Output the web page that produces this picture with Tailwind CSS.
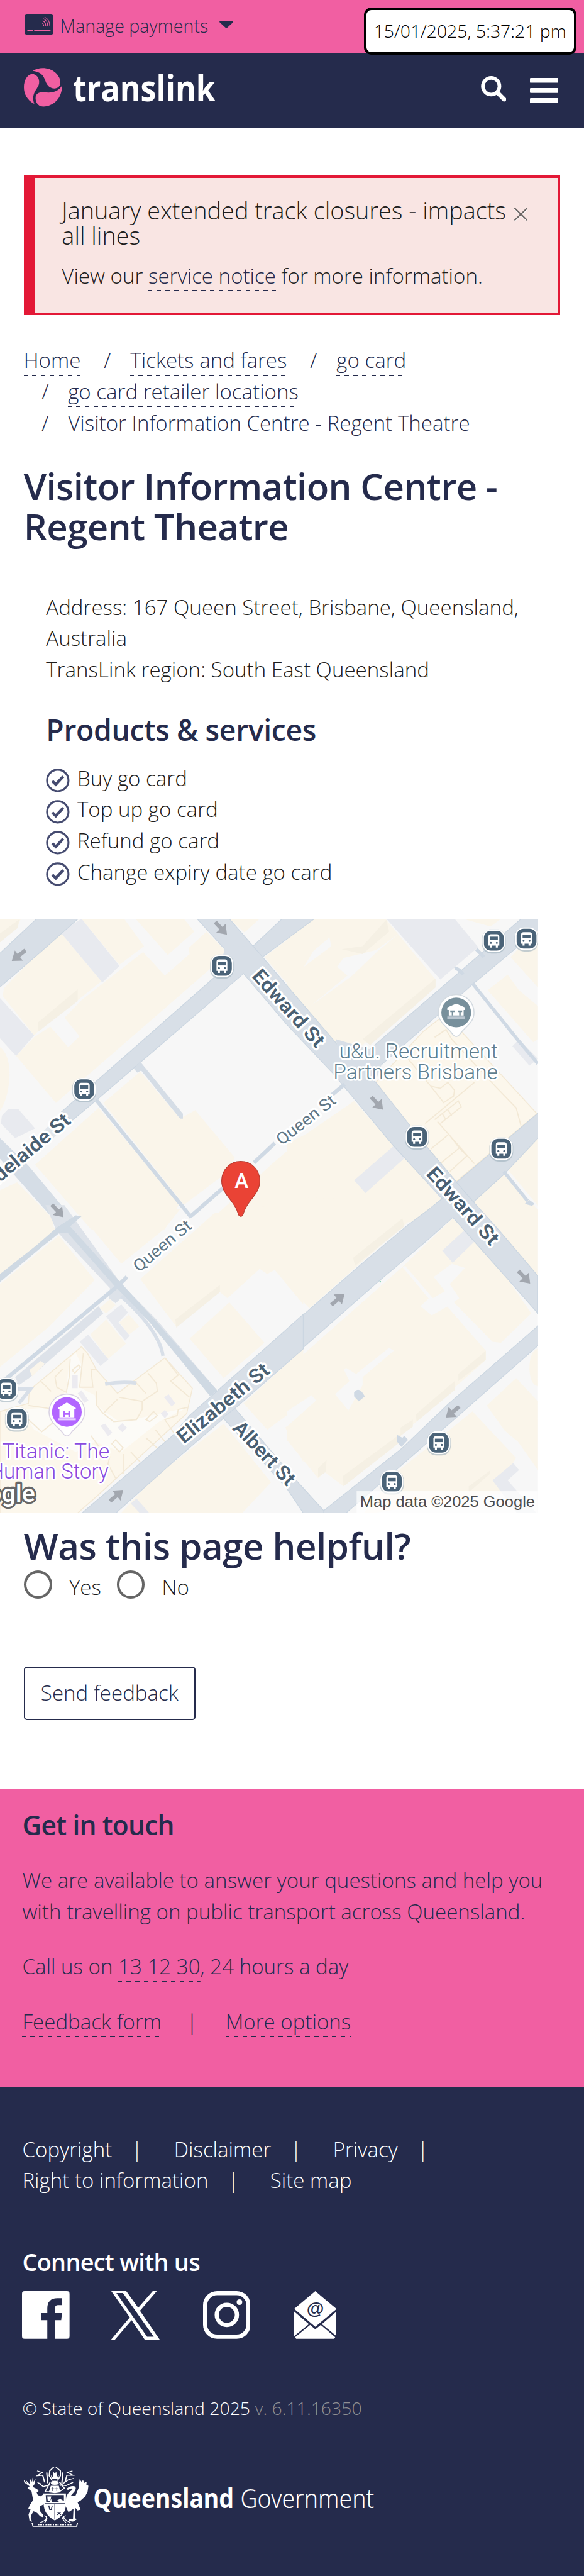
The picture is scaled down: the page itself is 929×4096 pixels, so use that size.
<!DOCTYPE html>
<html lang="en">
<head>
<meta charset="utf-8">
<title>Visitor Information Centre - Regent Theatre | Translink</title>
<script src="https://cdn.jsdelivr.net/npm/@tailwindcss/browser@4"></script>
</head>
<body class="bg-white">
<div class="relative w-[393px] h-[1732.75px] overflow-hidden [zoom:2.36387] font-['Open_Sans','Noto_Sans',sans-serif] font-light text-[14px] leading-[21px] text-[#1d1d1d]">

  <!-- Payments bar -->
  <div class="h-9 bg-[#f15fa2] flex items-start pl-[16.5px] text-[#252b4c]">
    <svg class="mt-[9.6px] w-[19.4px] h-[13.6px]" viewBox="0 0 19.4 13.6" fill="none"><rect width="19.4" height="13.6" rx="1.6" fill="#252b4c"/><path d="M1.9 11h3.9M6.5 11h11" stroke="#f15fa2" stroke-width=".8"/><path d="M12 5.8c.8.5 1 1.200 1 2M12.300 4.300c1.400.6 2 1.900 2 3.500M12.900 3c1.900.9 2.700 2.500 2.700 4.800M13.700 1.900c2.200 1 3.300 3 3.300 5.900" stroke="#f15fa2" stroke-width=".5" stroke-linecap="round"/></svg>
    <span class="ml-[4.5px] mt-[8.400px] text-[12.100px] leading-[18px] whitespace-nowrap">Manage payments</span>
    <svg class="ml-[7.500px] mt-[14px] w-[9.400px] h-[5px]" viewBox="0 0 9.400 5"><path d="M.9 0h7.600c.8 0 1.100.6.6 1.200L5.400 4.600c-.4.4-1 .4-1.400 0L.3 1.200C-.2.6.1 0 .9 0Z" fill="#252b4c"/></svg>
  </div>

  <!-- Recording clock overlay -->
  <div class="absolute left-[244.8px] top-[5px] w-[143px] h-[32px] rounded-[5px] border-2 border-black bg-white text-black flex items-center justify-center z-10"><span class="text-[12px] leading-[18px] whitespace-nowrap">15/01/2025, 5:37:21 pm</span></div>

  <!-- Site header -->
  <header class="h-[50px] bg-[#252b4c] flex items-start px-4">
    <svg class="mt-[9.500px] w-[132px] h-[30px] shrink-0 overflow-visible" viewBox="0 0 132 30">
      <g fill="#f15fa2"><path d="M6 2C10-.8 17-.6 21 3c3.600 3.100 4.600 7.500 2.500 9.700-2.400 2.200-6.400 1.200-8.200-2.100C13.500 7 13.500 3 6 2Z"/><path d="M5.200 4.100c3.300-.2 5.600 2.900 5 6.400-.7 4-5.700 6.200-3.200 13.700C2 21.500 0 17.500 0 13c0-5 2.500-8.500 5.200-8.900Z"/><path d="M25.500 12.200C26 20 20 26 13 26c-4 0-5.400-3.500-5.100-6.500C8.200 17 11 16 14 16.400c5 .6 9-.4 11.500-4.200Z"/></g>
      <text x="33" y="22.300" textLength="96" lengthAdjust="spacingAndGlyphs" font-size="24" font-weight="700" fill="#fff" font-family="Open Sans">translink</text>
    </svg>
    <svg class="ml-auto mt-[15.400px] w-[17px] h-[17px]" viewBox="0 0 17 17" fill="none" stroke="#fff"><circle cx="6.900" cy="6.800" r="5.600" stroke-width="2.400"/><path d="m11 11 4.600 4.600" stroke-width="2.900" stroke-linecap="round"/></svg>
    <svg class="ml-[16.300px] mr-[1.300px] mt-[16.600px] w-[19px] h-[17px]" viewBox="0 0 19 17" fill="#fff"><rect width="19" height="3.200" rx=".5"/><rect y="6.800" width="19" height="3.200" rx=".5"/><rect y="13.500" width="19" height="3.200" rx=".5"/></svg>
  </header>

  <main>
    <!-- Alert -->
    <section class="mt-8 ml-4 w-[361px] h-[94px] bg-[#f9e5e3] border-2 border-l-8 border-[#e31836] pt-[13.500px] pl-[18px] flex">
      <div class="w-[302px] shrink-0">
        <h2 class="text-[16px] leading-[17px] whitespace-nowrap">January extended track closures - impacts<br>all lines</h2>
        <p class="mt-2 whitespace-nowrap">View our <a class="inline-block text-[#252b4c] bg-[repeating-linear-gradient(90deg,#252b4c_0_2.500px,transparent_2.500px_5.500px,#252b4c_5.500px_6px)] bg-[length:100%_1px] bg-bottom bg-no-repeat">service notice</a> for more information.</p>
      </div>
      <svg class="ml-[2.500px] mt-[6.500px] w-[9px] h-[9.500px]" viewBox="0 0 9 9.500" fill="none"><path d="m.2 1 8.600 8.200M8.800 1 .2 9.200" stroke="#fff" stroke-width=".8"/><path d="m.2.3 8.600 8.400M8.800.3.2 8.700" stroke="#6b6564" stroke-width=".9"/></svg>
    </section>

    <!-- Breadcrumb -->
    <nav class="mt-5 ml-4 text-[#252b4c]">
      <ol>
        <li class="inline-block"><a class="inline-block bg-[repeating-linear-gradient(90deg,#252b4c_0_2.500px,transparent_2.500px_5.500px,#252b4c_5.500px_6px)] bg-[length:100%_1px] bg-bottom bg-no-repeat">Home</a></li>
        <li class="inline-block"><span class="pl-3 pr-[13px]">/</span><a class="inline-block bg-[repeating-linear-gradient(90deg,#252b4c_0_2.500px,transparent_2.500px_5.500px,#252b4c_5.500px_6px)] bg-[length:100%_1px] bg-bottom bg-no-repeat">Tickets and fares</a></li>
        <li class="inline-block"><span class="pl-3 pr-[13px]">/</span><a class="inline-block bg-[repeating-linear-gradient(90deg,#252b4c_0_2.500px,transparent_2.500px_5.500px,#252b4c_5.500px_6px)] bg-[length:100%_1px] bg-bottom bg-no-repeat">go card</a></li><br>
        <li class="inline-block"><span class="pl-3 pr-[13px]">/</span><a class="inline-block bg-[repeating-linear-gradient(90deg,#252b4c_0_2.500px,transparent_2.500px_5.500px,#252b4c_5.500px_6px)] bg-[length:100%_1px] bg-bottom bg-no-repeat">go card retailer locations</a></li><br>
        <li class="inline-block"><span class="pl-3 pr-[13px]">/</span>Visitor Information Centre - Regent Theatre</li>
      </ol>
    </nav>

    <h1 class="relative top-[.8px] mt-[17.800px] ml-4 text-[24.600px] leading-[27px] tracking-[-.26px] font-semibold text-[#252b4c]">Visitor Information Centre -<br>Regent Theatre</h1>

    <div class="mt-[31.200px] ml-[31px]">
      <p>Address: 167 Queen Street, Brisbane, Queensland,<br>Australia<br>TransLink region: South East Queensland</p>
      <h2 class="relative top-[.7px] mt-[17.200px] text-[19.600px] leading-6 tracking-[-.15px] font-semibold text-[#252b4c]">Products &amp; services</h2>
      <ul class="mt-[10.800px]">
        <li class="flex items-center gap-[5px]"><svg class="w-4 h-4 mt-[3px]" viewBox="0 0 16 16" fill="none" stroke="#454b70"><circle cx="8" cy="8" r="7.200" stroke-width="1.300"/><path d="m4.300 8.400 2.400 2.300 5-5.400" stroke-width="1.900"/></svg>Buy go card</li>
        <li class="flex items-center gap-[5px]"><svg class="w-4 h-4 mt-[3px]" viewBox="0 0 16 16" fill="none" stroke="#454b70"><circle cx="8" cy="8" r="7.200" stroke-width="1.300"/><path d="m4.300 8.400 2.400 2.300 5-5.400" stroke-width="1.900"/></svg>Top up go card</li>
        <li class="flex items-center gap-[5px]"><svg class="w-4 h-4 mt-[3px]" viewBox="0 0 16 16" fill="none" stroke="#454b70"><circle cx="8" cy="8" r="7.200" stroke-width="1.300"/><path d="m4.300 8.400 2.400 2.300 5-5.400" stroke-width="1.900"/></svg>Refund go card</li>
        <li class="flex items-center gap-[5px]"><svg class="w-4 h-4 mt-[3px]" viewBox="0 0 16 16" fill="none" stroke="#454b70"><circle cx="8" cy="8" r="7.200" stroke-width="1.300"/><path d="m4.300 8.400 2.400 2.300 5-5.400" stroke-width="1.900"/></svg>Change expiry date go card</li>
      </ul>
    </div>

    <!-- Map -->
    <svg class="block mt-[21px] w-[362px] h-[400px]" viewBox="0 1854 1086 1200" font-family="Roboto">
      <defs>
        <path id="arrow" d="M-17-4H0v-9L18 0 0 13V4h-17Z" fill="#a2a7af"/>
        <g id="bus"><rect x="-24" y="-23" width="48" height="49" rx="19" fill="#9fb0bd" opacity=".6"/><rect x="-23" y="-23" width="46" height="46" rx="18" fill="#fff"/><rect x="-20" y="-20" width="40" height="40" rx="14" fill="#4a6378"/><path d="M-11-8q0-5 5-5H6q5 0 5 5V10H8v4H4v-4H-4v4H-8v-4h-3Z" fill="#fff"/><path d="M-8-8H8v7H-8Z" fill="#4a6378"/><circle cx="-6" cy="4.500" r="2" fill="#4a6378"/><circle cx="6" cy="4.500" r="2" fill="#4a6378"/></g>
      </defs>
      <rect y="1854" width="1086" height="1200" fill="#f7f7f7"/>
      <!-- Blocks -->
      <g fill="#faf5ea">
        <g transform="translate(0 1840) scale(.38265 .39541)">
          <path d="M0 35H110L95 70 0 155ZM20 390 225 185 320 105 535 355 410 450 200 610 180 630 15 430ZM85 735 180 640 265 585 360 690 420 635 340 540 430 450 755 205 870 325 1000 215 995 185 1090 100 1190 200 1110 290 295 975ZM430 35H655L760 175 630 270ZM715 35H970L1025 100 885 220ZM0 690Q55 730 50 850 40 960 0 1015ZM545 975 740 815 950 1055 1030 1012 1240 1255 1170 1350 970 1495ZM185 1290 520 1000 945 1490 870 1620 480 1620ZM0 1420 90 1380 280 1568 280 1620H0ZM1430 1290 1600 1150V1600H1080ZM1210 35H1370L1290 105ZM1395 230 1600 80V460Z"/>
          <path d="M320 105 430 35 630 275 540 360ZM0 440 180 630 85 735 0 645ZM10 1040 45 1005 95 1005 185 1105 80 1155 5 1080Z" fill="#e8eaef"/>
          <path d="M200 565 410 395V455L200 612ZM0 110 100 40 95 80 0 155Z" fill="#f5f0e4"/>
        </g>
        <g transform="translate(579 1840) scale(.38265 .39541)">
          <path d="M0 125 130 35H520L790 350 400 680H270L0 375ZM930 35H1130L1075 75ZM1060 400 1165 320 1225 400 1325 480V650L1300 665ZM1180 230 1325 80V385ZM0 1185 100 1135 355 965 815 1465 700 1580 0 1620ZM985 1480 1145 1340 1325 1520V1620H1120ZM1145 1290 1325 1150V1500Z"/>
          <path d="M525 35H885L1010 180 810 345ZM355 1370 575 1185 635 1245 415 1435ZM1190 685 1225 650 1325 750 1280 785Z" fill="#e8eaef"/>
          <path d="M125 480 320 325 265 280 300 235 470 195 600 105 480 200 340 330ZM90 280 235 175 225 130 140 200Z" fill="#f7f7f7"/>
          <path d="M400 650 785 340V385L440 680ZM290 190 400 215 540 100 525 40 400 175Z" fill="#f5f0e4"/>
          <path d="M720 610 840 520 930 620 1320 1030 890 1380 740 1200 640 1085 470 870Z" fill="#fcf7ec" stroke="#f3e9d6" stroke-width="5"/>
          <path d="M760 1210 855 1135 910 1205 815 1280M860 1325 950 1245 910 1205M795 1070 990 1285M780 1060 905 965 920 995 810 1080M730 1080 990 870M760 890 825 970M780 640 840 600 870 650 1090 880 1210 1000 1235 1090M640 750 760 890 810 900 850 870 885 910 880 940 825 975M820 1030 840 1060M850 1010 870 1040" fill="none" stroke="#f3e9d6" stroke-width="6"/>
        </g>
        <g transform="translate(0 2440) scale(.38265 .40816)">
          <path d="M0 0H230L300 115 0 350ZM400 0H950L870 95 640 270ZM740 345 1130 20 1600-40V470L1450 300 1410 320 1370 295 1200 440 1160 410 930 580ZM1000 640 1210 460 1395 660 1180 835ZM0 370 310 130 500 350 260 580 0 780ZM1285 960 1600 690V960L1410 1090ZM1505 1080 1600 1000V1250ZM925 1245 1180 1060 1430 1350 1270 1510H630L820 1320ZM525 490 580 445 610 475 560 515ZM475 620 560 545 665 665 570 740ZM630 560 680 520 735 580 680 620Z"/>
          <path d="M560 530 640 470 675 510 625 560 685 625 660 650ZM420 655 465 620 572 742 530 775ZM690 1455 720 1430 790 1504H740Z" fill="#e8eaef"/>
          <path d="M925 545 1160 375V410L930 585Z" fill="#f5f0e4"/>
          <path d="M155 895 430 680 460 710 510 795 620 910 870 735 1015 885 985 1010 510 1420 400 1510H0V1000L150 960Z" fill="#fcf7ec" stroke="#f3e9d6" stroke-width="5"/>
          <path d="M365 740 400 710 430 770 420 880 500 920 510 970 620 1045 700 1040 990 980 840 1050 640 1200 500 1150 400 1200 180 1090 110 990 260 980 350 900Z" fill="#fcfbf7"/>
          <path d="M370 740 365 830 350 905 300 880 290 830 330 790M215 850 270 900M440 710 420 880 490 880 480 790 510 795M510 900 510 970 545 1010 620 940M545 1010 600 1050 720 1040 750 990V950L630 930M710 850 770 910M780 810 825 860 830 900 750 950M870 735 940 820 900 850 1000 930M990 980 940 990 935 1020 870 1040 920 1110M820 1090 880 1160M770 1130 840 1190M690 1200 740 1250M650 1210V1310M580 1220 570 1260 610 1330M150 970 260 985 300 1040 220 1100 150 1040M480 1120 520 1170M770 1040 810 1000 830 1020 790 1050ZM590 1160 610 1140 650 1180 630 1200ZM380 795 415 770 425 780 395 810Z" fill="none" stroke="#f3e9d6" stroke-width="6"/>
          <path d="M380 820H410V885H378ZM410 910 430 895 467 945 445 958ZM865 930 890 915 925 960 905 975ZM530 1070 555 1060 592 1105 570 1122ZM620 1080 645 1058 670 1080 645 1102ZM848 1010 870 992 890 1012 870 1033Z" fill="#ecebf0"/>
        </g>
        <g transform="translate(579 2440) scale(.38265 .40816)">
          <path d="M0-60 760-40 620 80 360 290 120 490 0 375ZM1050 0H1325V330L1200 210ZM0 790 610 285 875 45 1045 215 1165 345 1290 515 1130 660 1085 655 860 440 845 480 1050 700V745L300 1370 200 1300 165 1330 0 1140ZM580 1300 980 1000 1210 1230 1190 1260 1090 1340 1155 1400 400 1510ZM1055 970 1210 835 1325 950V1290L1220 1150 1150 1095ZM1325 690Q1280 700 1280 790 1285 870 1325 875Z"/>
          <path d="M705 480 745 445 770 440 835 405 775 335 870 270 940 290 860 370 910 440 850 480 765 525ZM255 915 330 850 300 790 315 785 365 815 540 685 565 700 400 830 400 870 325 995ZM0 1000 130 920 155 945 0 1075ZM610 285 625 280 780 450 765 460Z" fill="#f7f7f7"/>
          <path d="M350 240 610 45 620 85 360 280ZM905 815 1050 700V745L905 850ZM680 1015 885 850V895L685 1050ZM295 1320 600 1110V1150L300 1370ZM165 1280 210 1240 205 1300 165 1325ZM600 1080 665 1040V1075L600 1120ZM960 1370 1075 1290 1070 1310 960 1400Z" fill="#f5f0e4"/>
          <path d="M820 205 935 105 990 160 875 265ZM1085 1340 1195 1255 1225 1290 1165 1340 1325 1510H1220Z" fill="#e8eaef"/>
          <path d="M355 905Q380 875 405 915L412 925 380 950 355 925ZM580 1115 610 1130 620 1120 640 1140 605 1175 582 1150Z" fill="#cfd9e4"/>
          <path d="m478 352 8-3 10 12" fill="none" stroke="#6cc5a3" stroke-width="5"/>
        </g>
      </g>
      <!-- Roads -->
      <g fill="#d8dfe7" stroke="#cbd6e1" stroke-width="4">
        <g transform="translate(0 1840) scale(.38265 .39541)">
          <path d="M-10 220 210 20H430L220 200-10 392Z"/>
          <path d="m200 1150 125-130 55 45-100 90Z" opacity=".7" stroke="none"/>
          <path d="M325 1020 1130 335 1335 175 1505 20H1680L1385 230 1285 315 510 960 380 1065Z"/>
          <path d="M1210 35 1335 175 1385 230 1513 375 1778 675 1983 870 2253 1200 2498 1480 2633 1625 2838 1858V2049L2678 1873 2388 1558 2333 1465 2073 1190 1753 820 1513 575 1285 315 1195 200 1035 30Z"/>
          <path d="M1190 170 1335 178 1383 230 1285 312 1150 330Z" stroke="none"/>
          <path d="m705 800 35-35 225 265v25h-15L745 810l-20 10ZM0 1155 150 1295 365 1545 330 1620 100 1370 0 1260Z" fill="#d5dde6" stroke="none"/>
          <path d="m510 962 500 598M1340 1280l110-100M1010 1550l165-140M1750 935l68-55" fill="none" stroke="#cfd9e4" stroke-width="20"/>
        </g>
        <g transform="translate(579 1840) scale(.38265 .39541)">
          <path d="M350 790 440 700 1255 20H1340V80L980 370 500 780ZM895 1380 1340 1015V1140L1145 1340 985 1480Z"/>
          <path d="M260 650 450 705 500 780 470 860 280 800Z" stroke="none"/>
          <path d="m980 365 240 290 105 120M1000 190l40 40M885 290q20-5 45 30M1145 1325l125 150" fill="none" stroke="#cfd9e4" stroke-width="18"/>
          <path d="m1255 1490 25-20 28 20-15 10Z" stroke="none" fill="#cfd9e4"/>
        </g>
        <g transform="translate(579 2440) scale(.38265 .40816)">
          <path d="m0 595 120-100 250-205L630 85 750 0l80-60 70 80-160 135-260 205L0 755Z"/>
          <path d="m750 0 100-70 100 100-75 10-60 50Z" stroke="none"/>
          <path d="m100 1520 95-30 415-310 240-215 490-400v97L900 1025l-300 245-310 250Z"/>
        </g>
        <g transform="translate(0 2440) scale(.38265 .40816)">
          <path d="M1600 520 1000 1020 910 1120 410 1520H590L925 1240 1240 985 1600 690Z"/>
          <path d="m1175 1030 65-45 303 335 165 170v30h-95l-100-140Z"/>
          <path d="M240-20H340L640 370 820 540 1145 895 1110 925 790 560 650 430 610 465 575 440 580 390 300 110Z" fill="#dde2e9" stroke="none"/>
          <path d="M300 90 400 30 430 35 370 85 625 350 800 530 1145 895 1110 925 790 560 600 375 355 115 310 120 210 195 0 360V320L190 180Z" fill="#cfd9e3" stroke="none"/>
          <path d="M80 830 520 480 545 515 160 830 100 870Z" fill="#dde2e9" stroke="none"/>
          <path d="m155 795 60-45 20 15-65 62Z" fill="#faf5ea" stroke="none"/>
          <path d="m670 335-50 45L30 840" fill="none" stroke="#cfd9e4" stroke-width="20"/>
          <path d="M640 430Q840 600 860 725M555 865Q640 850 720 860M95 890H160L100 960" fill="none" stroke="#d8dfe8" stroke-width="18"/>
        </g>
      </g>
      <use href="#arrow" transform="translate(38 1928) rotate(142)"/><use href="#arrow" transform="translate(446 1873) rotate(47)"/><use href="#arrow" transform="translate(116 2443) rotate(47)"/><use href="#arrow" transform="translate(761 2226) rotate(47)"/><use href="#arrow" transform="translate(1058 2577) rotate(47)"/><use href="#arrow" transform="translate(682 2622) rotate(-40)"/><use href="#arrow" transform="translate(914 2849) rotate(141)"/><use href="#arrow" transform="translate(235 3018) rotate(-40)"/>
      <use href="#bus" x="448" y="1949"/><use href="#bus" x="170" y="2198"/><use href="#bus" x="997" y="1898"/><use href="#bus" x="1063" y="1894"/><use href="#bus" x="842" y="2294"/><use href="#bus" x="1012" y="2318"/><use href="#bus" x="886" y="2911"/><use href="#bus" x="791" y="2990"/><use href="#bus" x="13" y="2803"/><use href="#bus" x="34" y="2863"/>
      <!-- Street names -->
      <g font-size="40" font-weight="600" fill="#4a6073" stroke="#fff" stroke-width="8" stroke-linejoin="round" paint-order="stroke" text-anchor="middle">
        <text transform="translate(583 2034) rotate(48)" y="14" textLength="196" lengthAdjust="spacingAndGlyphs">Edward St</text>
        <text transform="translate(935 2433) rotate(48)" y="14" textLength="196" lengthAdjust="spacingAndGlyphs">Edward St</text>
        <text transform="translate(450 2831) rotate(-39.500)" y="14" textLength="228" lengthAdjust="spacingAndGlyphs">Elizabeth St</text>
        <text transform="translate(534 2932) rotate(46.500)" y="14" textLength="162" lengthAdjust="spacingAndGlyphs">Albert St</text>
        <text transform="translate(136 2254) rotate(-40)" y="14" text-anchor="end" textLength="218" lengthAdjust="spacingAndGlyphs">Adelaide St</text>
        <g font-size="33" font-weight="400" fill="#5f7787">
          <text transform="translate(617 2259) rotate(-38)" y="12" textLength="142" lengthAdjust="spacingAndGlyphs">Queen St</text>
          <text transform="translate(327 2513) rotate(-40)" y="12" textLength="142" lengthAdjust="spacingAndGlyphs">Queen St</text>
        </g>
      </g>
      <!-- Places -->
      <g font-size="41" stroke="#fff" stroke-width="7" stroke-linejoin="round" paint-order="stroke" text-anchor="end">
        <g fill="#5f7f90"><text x="1005" y="2136" textLength="320" lengthAdjust="spacingAndGlyphs">u&amp;u. Recruitment</text><text x="1005" y="2177" textLength="332" lengthAdjust="spacingAndGlyphs">Partners Brisbane</text></g>
        <g fill="#8a4bdf"><text x="221" y="2943" textLength="217" lengthAdjust="spacingAndGlyphs">Titanic: The</text><text x="219" y="2984" textLength="241" lengthAdjust="spacingAndGlyphs">Human Story</text></g>
      </g>
      <path d="M921 2007a36 36 0 0 1 36 36c0 22-20 30-28 43q-8 11-16 0c-8-13-28-21-28-43a36 36 0 0 1 36-36Z" fill="#fff" stroke="#d3dae0" stroke-width="2"/>
      <circle cx="921" cy="2043" r="30" fill="#78909c"/><path d="m903 2033 18-8 18 8v5h-3v11h-30v-11h-3Z" fill="#fff"/><path d="M909 2039h9v3h-3v7h-3v-7h-3ZM924 2039h9v3h-3v7h-3v-7h-3Z" fill="#78909c"/><path d="M903 2051h36v6h-36Z" fill="#b9c5cf"/>
      <path d="M135 2813a36 36 0 0 1 36 36c0 22-20 31-28 43q-8 11-16 0c-8-12-28-21-28-43a36 36 0 0 1 36-36Z" fill="#fff" stroke="#d9d2e3" stroke-width="2"/>
      <circle cx="135" cy="2849" r="30" fill="#b266ff"/><path d="m117 2841 18-11 18 11v3h-3v16h-30v-16h-3Z" fill="#fff"/><path d="M128 2847h4v4h6v-4h4v12h-4v-4h-6v4h-4Z" fill="#b266ff"/><path d="M117 2862h36v4h-36Z" fill="#e6d2ff"/>
      <path d="M486 2343.500c22 0 38.500 17 38.500 39 0 29-27 40-33 66q-2 6-5.500 6t-5.500-6c-6-26-33-37-33-66 0-22 16.500-39 38.500-39Z" fill="#ea4335" stroke="#b83b30" stroke-width="1.500"/>
      <text x="487.500" y="2397" font-size="42" font-weight="500" fill="#fff" text-anchor="middle">A</text>
      <text x="71" y="3031" font-size="50" font-weight="500" fill="#fff" stroke="#666" stroke-width="8" stroke-linejoin="round" paint-order="stroke" text-anchor="end">Google</text>
      <rect x="720" y="3009" width="366" height="45" fill="#fff" opacity=".7"/>
      <text x="727" y="3041" font-family="Liberation Sans" font-size="30" fill="#4d4d4d" textLength="353" lengthAdjust="spacingAndGlyphs">Map data ©2025 Google</text>
    </svg>

    <!-- Feedback -->
    <section class="ml-4">
      <h2 class="relative top-[.8px] mt-[7.600px] text-[24.600px] leading-[27px] tracking-[-.2px] font-semibold text-[#252b4c]">Was this page helpful?</h2>
      <div class="mt-[3.600px] h-[22px] flex items-start">
        <span class="w-[19px] h-[19px] rounded-full border-2 border-[#666]"></span><span class="ml-[11.500px] mt-[1px] w-[32px]">Yes</span>
        <span class="w-[19px] h-[19px] rounded-full border-2 border-[#666]"></span><span class="ml-[11.500px] mt-[1px]">No</span>
      </div>
      <button class="mt-[43px] block w-[115.500px] h-9 rounded-[2px] border border-[#252b4c] pb-px text-[#252b4c] whitespace-nowrap">Send feedback</button>
    </section>
  </main>

  <!-- Get in touch -->
  <section class="mt-[46px] h-[201px] bg-[#f15fa2] text-[#252b4c] pl-[15px] pt-3">
    <h2 class="relative top-[.7px] text-[18px] leading-6 tracking-[-.35px] font-semibold">Get in touch</h2>
    <p class="mt-[15.200px] whitespace-nowrap">We are available to answer your questions and help you<br>with travelling on public transport across Queensland.</p>
    <p class="mt-4">Call us on <a class="inline-block bg-[repeating-linear-gradient(90deg,#252b4c_0_2.500px,transparent_2.500px_5.500px,#252b4c_5.500px_6px)] bg-[length:100%_1px] bg-bottom bg-no-repeat">13 12 30</a>, 24 hours a day</p>
    <p class="mt-4 flex"><a class="bg-[repeating-linear-gradient(90deg,#252b4c_0_2.500px,transparent_2.500px_5.500px,#252b4c_5.500px_6px)] bg-[length:100%_1px] bg-bottom bg-no-repeat">Feedback form</a><span class="w-[43px] text-center -ml-[1px] mr-[1px]">|</span><a class="bg-[repeating-linear-gradient(90deg,#252b4c_0_2.500px,transparent_2.500px_5.500px,#252b4c_5.500px_6px)] bg-[length:100%_1px] bg-bottom bg-no-repeat">More options</a></p>
  </section>

  <!-- Footer -->
  <footer class="h-[330px] bg-[#252b4c] text-white pl-[15px] pt-[31px]">
    <ul class="flex"><li>Copyright<span class="pl-[13px] pr-[21px]">|</span></li><li>Disclaimer<span class="pl-[13px] pr-[21px]">|</span></li><li>Privacy<span class="pl-[13px]">|</span></li></ul>
    <ul class="flex"><li>Right to information<span class="pl-[13px] pr-[21px]">|</span></li><li>Site map</li></ul>
    <h2 class="relative top-[.7px] mt-8 text-[16px] leading-6 tracking-[-.3px] font-semibold">Connect with us</h2>
    <div class="mt-[8px] h-[33px] flex items-start">
      <svg class="w-8 h-8" viewBox="88 372 188 288" preserveAspectRatio="none" fill="#fff"><path d="M98 372H266Q276 372 276 388V645Q276 660 266 660H218V548H243L246 505H218V478Q218 457 230 457H247V415H228Q188 415 188 478V505H164V548H188V660H98Q88 660 88 645V388Q88 372 98 372Z"/></svg>
      <svg class="ml-[28px] w-[32.500px] h-[32.700px]" viewBox="441 369 190 294" preserveAspectRatio="none" fill="#fff"><path d="M441 369H500L547 470 604 369H620L554 488 632 663H573L521 545 455 663H440L514 528ZM461 380 582 645H608L487 380Z" fill-rule="evenodd"/></svg>
      <svg class="ml-[29px] w-8 h-8" viewBox="0 0 32 32" fill="none" stroke="#fff" stroke-width="2.800"><rect x="1.400" y="1.400" width="29.200" height="29.200" rx="8"/><circle cx="16" cy="16" r="6.800"/><circle cx="24.500" cy="7.400" r="1.900" fill="#fff" stroke="none"/></svg>
      <svg class="ml-[29.500px] w-[28.500px] h-8" viewBox="0 0 28.500 32" fill="#fff"><path d="m14.200 0 14.300 12L14.200 24 0 12ZM0 13.700l9.900 8.500L0 30.300ZM28.500 13.700l-9.900 8.500 9.900 8.100ZM10.700 22.700l3.500 3 3.700-3 9.700 8.300-.7 1H1.300L.6 31Z"/><text x="14.200" y="15.800" font-size="12" font-weight="700" text-anchor="middle" fill="#252b4c" font-family="Liberation Sans">@</text></svg>
    </div>
    <p class="mt-[36.800px] text-[12px] leading-[18px]">© State of Queensland 2025 <span class="text-[#8f8f92]">v. 6.11.16350</span></p>
    <svg class="mt-[26.500px] w-[240px] h-[50px]" viewBox="15 1655 240 50">
      <!-- Coat of arms -->
      <g transform="translate(0 1640) scale(.17007 .11111)" fill="#fff">
        <path d="M110 300 118 288 97 265 95 250 108 270 104 252 120 278 118 240 128 262 130 236 134 262 142 242 138 275 130 292 148 305 154 318 146 325 150 340 160 350 176 335 178 395 158 410 160 440 172 462 172 476 160 470 148 450 134 440 126 460 122 480 128 502 118 500 114 460 122 428 112 428 118 405 132 372 126 320Z"/>
        <path d="M262 305 275 292Q292 282 300 292 304 310 290 330L280 348 300 345 312 300 316 245 324 262 330 250 334 268 344 262 343 280 351 285 348 320 338 350 320 375 308 385 320 430 308 435 300 420 298 480 304 490 290 502 275 500 272 490 290 485 292 425 272 445 258 400 264 350Q270 325 288 310L284 302 270 310Z"/>
        <path d="M172 332H262V400Q262 460 218 496 176 462 174 400Z"/>
        <path d="M182 342H254V378L240 365 228 372 236 385H206L204 365 196 385H184ZM188 350 204 350 200 376 190 376Z" fill="#252b4c" fill-rule="evenodd"/>
        <path d="M180 393H258M218 396V490" stroke="#252b4c" stroke-width="3"/>
        <path d="M194 405 198 430H204L208 405M190 445H210M228 445 242 462M242 445 228 462" stroke="#252b4c" stroke-width="4" fill="none"/>
        <path d="M202 285H234L240 325 218 330 194 325Z"/><path d="M210 295V318M226 295V318M204 303H216M220 303H232" stroke="#252b4c" stroke-width="3"/>
        <path d="M204 260Q218 250 232 260L234 275Q218 285 202 275ZM212 200 218 212 224 200 226 232 234 222 230 245H206L202 222 210 232Z"/>
        <g fill="none" stroke="#fff" stroke-width="5"><path d="M214 172 198 195 196 225 208 255M222 172 240 195 240 225 228 255M148 195 168 205 148 225 170 222 178 265M186 205 190 270M288 195 268 205 290 222 266 222 258 265M250 205 246 270M150 265 172 290 200 280M290 265 262 285 236 280M200 262 180 320 202 322M236 262 256 300 236 322M152 268 165 275M294 240 270 250 240 285"/><path d="M176 466Q196 475 178 508M262 466Q236 475 262 508M184 470Q190 495 160 508M254 470Q250 490 280 508" stroke-width="4"/><path d="M128 510H308L304 532H132Z" stroke-width="4.500"/></g>
        <path d="M152 521H286" stroke="#fff" stroke-width="8" stroke-dasharray="5 3 8 3 4 6"/>
      </g>
      <g fill="#fff" font-family="Noto Sans"><text x="63" y="1686.700" font-size="17.800" font-weight="700" textLength="94.500" lengthAdjust="spacingAndGlyphs">Queensland</text><text x="162" y="1686.700" font-size="17.800" font-weight="300" textLength="90" lengthAdjust="spacingAndGlyphs">Government</text></g>
    </svg>
  </footer>
</div>
</body>
</html>
